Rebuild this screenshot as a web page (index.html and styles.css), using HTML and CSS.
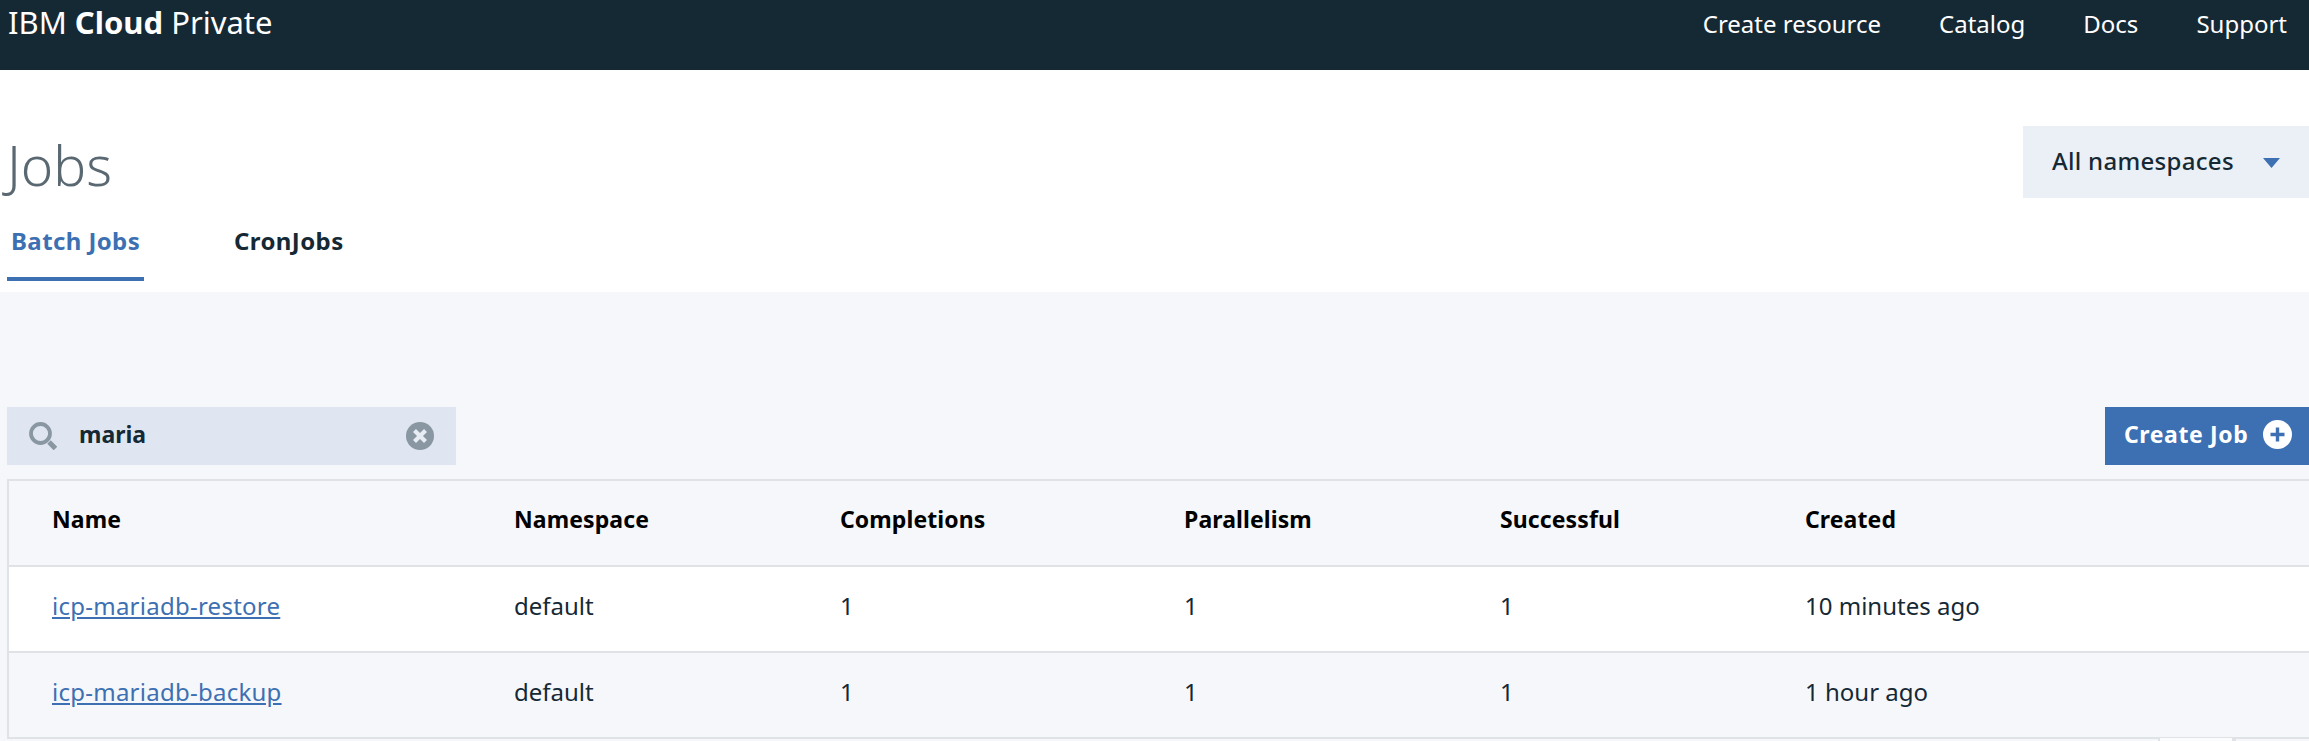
FILE: index.html
```html
<!DOCTYPE html>
<html lang="en">
<head>
<meta charset="utf-8">
<title>Jobs - IBM Cloud Private</title>
<link rel="stylesheet" href="styles.css">
</head>
<body>
<header class="topbar">
  <div class="brand">IBM <b>Cloud</b> Private</div>
  <nav class="topnav">
    <a>Create resource</a>
    <a>Catalog</a>
    <a>Docs</a>
    <a>Support</a>
  </nav>
</header>
<section class="pagehead">
  <div class="titlerow">
    <h1>Jobs</h1>
    <div class="nsselect">
      <span class="nslabel">All namespaces</span>
      <svg class="caret" width="17" height="10" viewBox="0 0 17 10"><path d="M0 0h17L8.500 10z"/></svg>
    </div>
  </div>
  <div class="tabs">
    <a class="tab active">Batch Jobs</a>
    <a class="tab">CronJobs</a>
  </div>
</section>
<main class="content">
  <div class="toolbar">
    <div class="search">
      <svg class="searchicon" width="28" height="28" viewBox="0 0 28 28"><circle cx="11.500" cy="11.500" r="9.500" fill="none" stroke="#8897a2" stroke-width="3.800"/><path d="M20 20l6.500 6.500" stroke="#8897a2" stroke-width="5"/></svg>
      <span class="query">maria</span>
      <svg class="clear" width="28" height="28" viewBox="0 0 28 28"><circle cx="14" cy="14" r="14" fill="#8897a2"/><path d="M8.500 8.500l11 11M19.500 8.500l-11 11" stroke="#e8edf4" stroke-width="4.200"/></svg>
    </div>
    <button class="create">
      <span class="createlabel">Create Job</span>
      <svg width="29" height="29" viewBox="0 0 29 29"><circle cx="14.500" cy="14.500" r="14.500" fill="#fff"/><path d="M14.500 7.500v14M7.500 14.500h14" stroke="#3d70b2" stroke-width="3.400"/></svg>
    </button>
  </div>
  <div class="table">
    <div class="row head">
      <div>Name</div><div>Namespace</div><div>Completions</div><div>Parallelism</div><div>Successful</div><div>Created</div>
    </div>
    <div class="row white">
      <div><a class="link">icp-mariadb-restore</a></div><div>default</div><div>1</div><div>1</div><div>1</div><div>10 minutes ago</div>
    </div>
    <div class="row">
      <div><a class="link">icp-mariadb-backup</a></div><div>default</div><div>1</div><div>1</div><div>1</div><div>1 hour ago</div>
    </div>
  </div>
  <div class="pager"><span class="pagebox"></span></div>
</main>
</body>
</html>
```
FILE: styles.css
```css
* { box-sizing: border-box; }
html, body { margin: 0; padding: 0; }
body {
  width: 2309px;
  height: 741px;
  overflow: hidden;
  background: #fff;
  font-family: "Noto Sans", "Open Sans", sans-serif;
  color: #152935;
}
.topbar {
  height: 70px;
  background: #152935;
  color: #fff;
  display: flex;
  justify-content: space-between;
  padding: 0 22px 0 8px;
}
.brand { font-size: 31px; line-height: 44px; }
.brand b { font-weight: 700; }
.topnav { display: flex; gap: 58px; font-size: 24px; line-height: 47px; }
.pagehead { height: 222px; padding-top: 56px; }
.titlerow { display: flex; justify-content: space-between; height: 72px; }
h1 {
  margin: 0;
  padding: 10px 0 0 7px;
  font-size: 55px;
  line-height: 58px;
  font-weight: 300;
  color: #5a6872;
}
.nsselect {
  width: 286px;
  height: 72px;
  background: #ebf0f7;
  display: flex;
  align-items: center;
  padding: 0 0 4px 29px;
  gap: 29px;
  font-size: 24px;
  letter-spacing: 0.3px;
  font-weight: 500;
}
.caret { fill: #3d70b2; margin-top: 6px; }
.tabs { display: flex; padding: 22px 0 0 7px; gap: 86px; }
.tab {
  display: block;
  height: 61px;
  line-height: 42px;
  font-size: 24px;
  letter-spacing: 0.4px;
  font-weight: 700;
  border-bottom: 4px solid transparent;
  padding: 0 4px;
  width: 137px;
  white-space: nowrap;
}
.tab.active { color: #3d70b2; border-bottom-color: #3d70b2; }
.content { height: 449px; background: #f5f7fa; padding-top: 115px; position: relative; }
.toolbar { display: flex; justify-content: space-between; padding-left: 7px; height: 58px; }
.search {
  width: 449px;
  background: #dfe6f1;
  display: flex;
  align-items: center;
  padding: 0 22px;
  font-size: 23px;
  font-weight: 700;
}
.searchicon { margin-right: 22px; }
.query { flex: 1; position: relative; top: -2px; }
.create {
  width: 204px;
  border: 0;
  background: #3d70b2;
  color: #fff;
  display: flex;
  align-items: center;
  justify-content: space-between;
  padding: 0 17px 3px 19px;
  font: 700 23px "Noto Sans", sans-serif;
  letter-spacing: 0.6px;
}
.createlabel { position: relative; top: -1px; }
.table { margin: 14px 0 0 7px; border-left: 2px solid #dfe3e6; border-top: 2px solid #dfe3e6; }
.row {
  display: grid;
  grid-template-columns: 462px 326px 344px 316px 305px 1fr;
  height: 86px;
  align-items: center;
  padding: 0 0 8px 43px;
  border-bottom: 2px solid #dfe3e6;
  font-size: 24px;
  color: #152935;
}
.row.white { background: #fff; }
.row.head { font-weight: 700; font-size: 23px; letter-spacing: 0.1px; color: #000; }
.link { color: #3d70b2; text-decoration: underline; letter-spacing: 0.25px; }
.pager { position: absolute; right: 0; bottom: 0; display: flex; height: 3px; width: 151px; }
.pagebox { width: 78px; background: #fbfcfd; border-left: 2px solid #dfe3e6; border-right: 4px solid #dfe3e6; }
```
